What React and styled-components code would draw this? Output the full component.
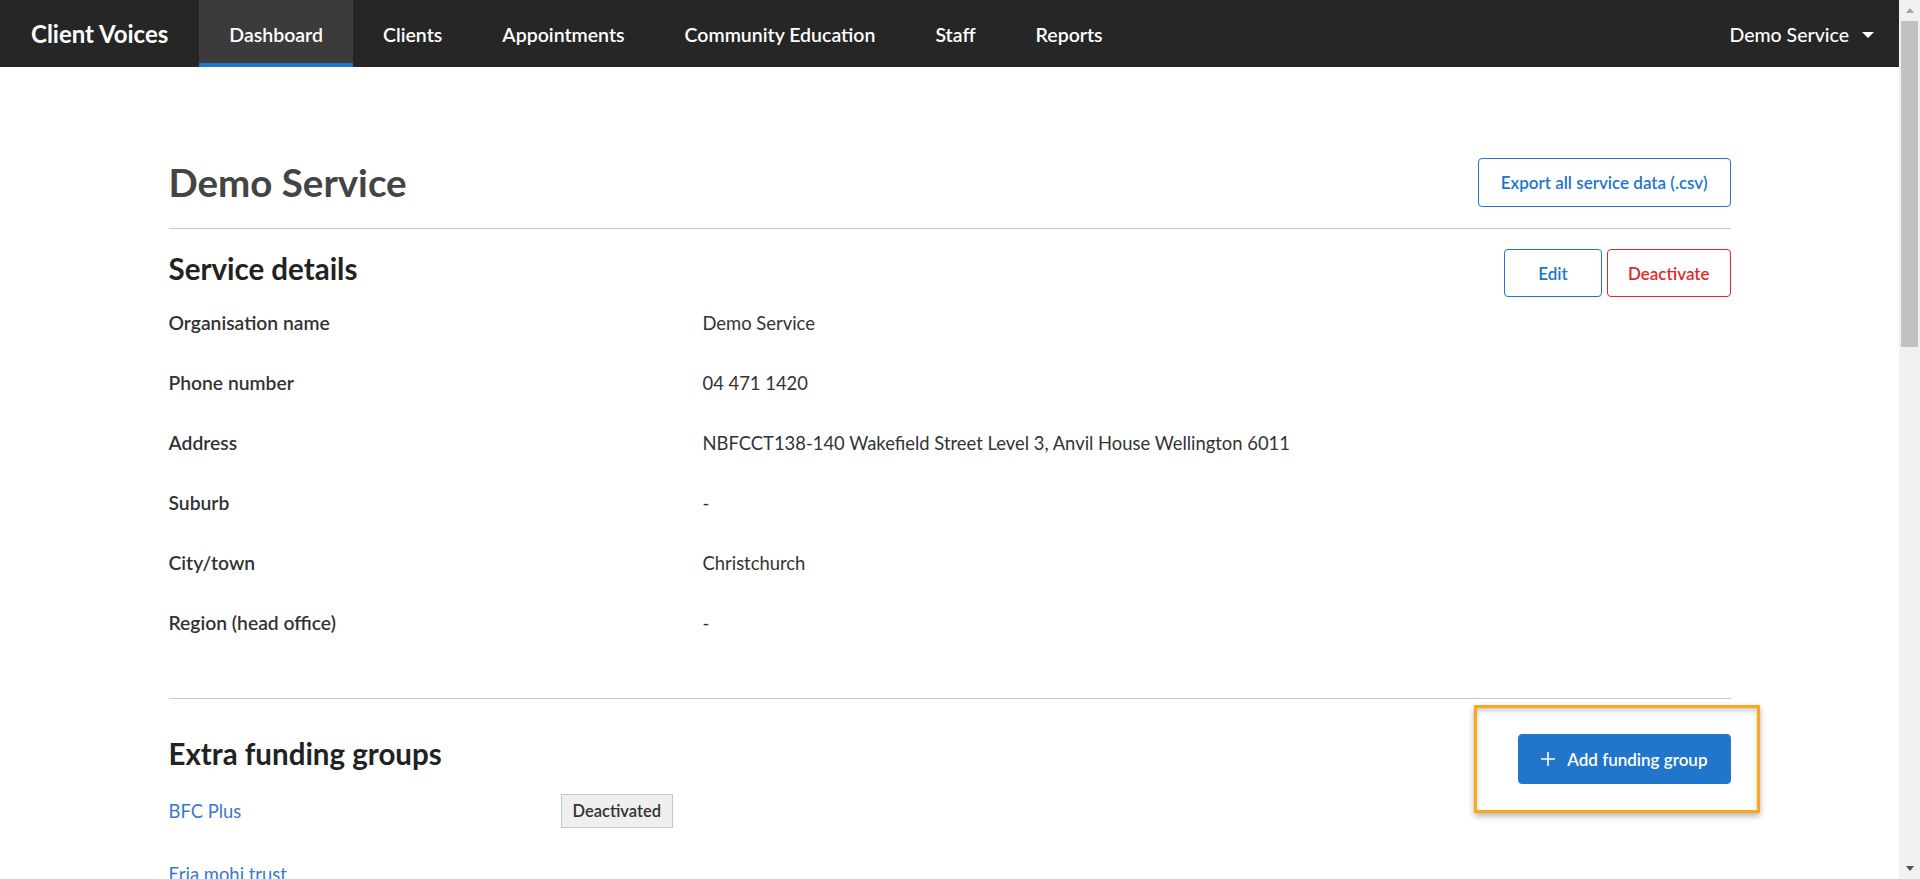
import React from 'react';
import styled, { createGlobalStyle } from 'styled-components';

const GlobalStyle = createGlobalStyle`
  body {
    margin: 0;
    overflow: hidden;
    background: #fff;
    color: #333;
    font-family: Lato, "Liberation Sans", sans-serif;
  }
`;

const Shell = styled.div`
  display: flex;
  height: 100vh;
  overflow: hidden;
`;

const Viewport = styled.div`
  flex: 1;
  min-width: 0;
`;

const Scrollbar = styled.div`
  display: flex;
  flex-direction: column;
  width: 21px;
  background: #f1f1f1;
`;

const ScrollArrow = styled.div`
  display: flex;
  align-items: center;
  justify-content: center;
  height: 21px;
  margin-top: ${(p) => (p.$down ? 'auto' : '0')};
  &::before {
    content: '';
    width: 0;
    height: 0;
    border-left: 4px solid transparent;
    border-right: 4px solid transparent;
    ${(p) =>
      p.$down
        ? 'border-top: 5px solid #505050;'
        : 'border-bottom: 5px solid #a3a3a3;'}
  }
`;

const Thumb = styled.div`
  height: 326px;
  margin: 0 2px;
  background: #c1c1c1;
`;

const NavBar = styled.nav`
  display: flex;
  height: 67px;
  background: #262626;
`;

const Brand = styled.a`
  display: flex;
  align-items: center;
  padding: 0 31px;
  color: #fff;
  font-size: 24px;
  font-weight: 700;
  text-decoration: none;
`;

const NavItem = styled.a`
  display: flex;
  align-items: center;
  padding: 2px 30px 0;
  color: #fff;
  font-size: 19.5px;
  font-weight: 600;
  text-decoration: none;
  background: ${(p) => (p.$active ? '#3b3b3b' : 'transparent')};
  box-shadow: ${(p) => (p.$active ? 'inset 0 -4px 0 #2176cc' : 'none')};
`;

const UserMenu = styled.a`
  display: flex;
  align-items: center;
  gap: 13px;
  margin-left: auto;
  padding: 2px 25px 0 30px;
  color: #fff;
  font-size: 19.5px;
  font-weight: 500;
  text-decoration: none;
`;

const Caret = styled.span`
  width: 0;
  height: 0;
  border-left: 6px solid transparent;
  border-right: 6px solid transparent;
  border-top: 6px solid #fff;
`;

const Main = styled.main`
  max-width: 1562px;
  margin: 0 auto;
  padding-top: 91px;
`;

const PageHeader = styled.header`
  display: flex;
  justify-content: space-between;
  align-items: center;
  padding-bottom: 21px;
  border-bottom: 1px solid #c8c8c8;
`;

const Title = styled.h1`
  margin: 0;
  color: #444;
  font-size: 38.5px;
  font-weight: 700;
  line-height: 1.2;
`;

const Section = styled.section`
  padding-bottom: ${(p) => p.$bottom || 0}px;
  border-bottom: ${(p) => (p.$divider ? '1px solid #c8c8c8' : 'none')};
`;

const SectionHead = styled.div`
  display: flex;
  justify-content: space-between;
  align-items: flex-start;
  margin-top: ${(p) => p.$top}px;
`;

const Heading = styled.h2`
  margin: 0;
  color: #222;
  font-size: 29.5px;
  font-weight: 700;
  line-height: 1.35;
`;

const ButtonGroup = styled.div`
  display: flex;
  gap: 5px;
`;

const Button = styled.button`
  display: inline-flex;
  align-items: center;
  justify-content: center;
  gap: 12px;
  min-width: 98px;
  height: ${(p) => p.$height || 48}px;
  padding: 0 ${(p) => p.$pad || 22}px;
  border: 1px solid ${(p) => p.$color};
  border-radius: 4px;
  background: ${(p) => (p.$solid ? p.$color : '#fff')};
  color: ${(p) => (p.$solid ? '#fff' : p.$color)};
  font-family: inherit;
  font-size: 17px;
  font-weight: 600;
  cursor: pointer;
`;

const DetailList = styled.dl`
  margin: 0;
`;

const DetailRow = styled.div`
  display: grid;
  grid-template-columns: 534px 1fr;
  align-items: baseline;
  padding: 14px 0 22px;
  line-height: 24px;
`;

const Label = styled.dt`
  font-size: 19.3px;
  font-weight: 600;
  color: #333;
`;

const Value = styled.dd`
  margin: 0;
  font-size: 18.4px;
  color: #333;
`;

const Highlight = styled.div`
  position: relative;
`;

const Ring = styled.span`
  position: absolute;
  top: -29px;
  right: -29px;
  bottom: -29px;
  left: -44px;
  border: 3px solid #f7a81b;
  box-shadow: 0 3px 6px rgba(0, 0, 0, 0.3), inset 0 3px 5px rgba(0, 0, 0, 0.2);
  pointer-events: none;
`;

const FundingList = styled.ul`
  margin: -5px 0 0;
  padding: 0;
  list-style: none;
`;

const FundingRow = styled.li`
  display: grid;
  grid-template-columns: 392px auto;
  justify-content: start;
  align-items: center;
  height: 63px;
  line-height: 24px;
  font-size: 18.4px;
`;

const GroupLink = styled.a`
  color: #3a78cb;
  text-decoration: none;
`;

const Badge = styled.span`
  display: inline-flex;
  align-items: center;
  height: 34px;
  padding: 0 11px;
  box-sizing: border-box;
  border: 1px solid #c6c6c6;
  background: #efefef;
  color: #333;
  font-size: 16.5px;
  font-weight: 600;
`;

const PlusIcon = () => (
  <svg width="14" height="14" viewBox="0 0 14 14" aria-hidden="true">
    <path d="M7 0v14M0 7h14" stroke="#fff" strokeWidth="1.6" />
  </svg>
);

const details = [
  ['Organisation name', 'Demo Service'],
  ['Phone number', '04 471 1420'],
  ['Address', 'NBFCCT138-140 Wakefield Street Level 3, Anvil House Wellington 6011'],
  ['Suburb', '-'],
  ['City/town', 'Christchurch'],
  ['Region (head office)', '-'],
];

const groups = [
  { name: 'BFC Plus', deactivated: true },
  { name: 'Eria mohi trust', deactivated: false },
];

const navItems = ['Dashboard', 'Clients', 'Appointments', 'Community Education', 'Staff', 'Reports'];

export default function App() {
  return (
    <Shell>
      <GlobalStyle />
      <Viewport>
        <NavBar>
          <Brand href="#">Client Voices</Brand>
          {navItems.map((item) => (
            <NavItem key={item} href="#" $active={item === 'Dashboard'}>
              {item}
            </NavItem>
          ))}
          <UserMenu href="#">
            Demo Service <Caret />
          </UserMenu>
        </NavBar>

        <Main>
          <PageHeader>
            <Title>Demo Service</Title>
            <Button $color="#2176cc" $height={49}>Export all service data (.csv)</Button>
          </PageHeader>

          <Section $divider $bottom={41}>
            <SectionHead $top={20}>
              <Heading>Service details</Heading>
              <ButtonGroup>
                <Button $color="#2176cc">Edit</Button>
                <Button $color="#dd2a2a" $pad={20}>Deactivate</Button>
              </ButtonGroup>
            </SectionHead>
            <DetailList>
              {details.map(([label, value]) => (
                <DetailRow key={label}>
                  <Label>{label}</Label>
                  <Value>{value}</Value>
                </DetailRow>
              ))}
            </DetailList>
          </Section>

          <Section>
            <SectionHead $top={35}>
              <Heading>Extra funding groups</Heading>
              <Highlight>
                <Ring />
                <Button $color="#2176cc" $solid $height={50}>
                  <PlusIcon />
                  Add funding group
                </Button>
              </Highlight>
            </SectionHead>
            <FundingList>
              {groups.map((g) => (
                <FundingRow key={g.name}>
                  <GroupLink href="#">{g.name}</GroupLink>
                  {g.deactivated && <Badge>Deactivated</Badge>}
                </FundingRow>
              ))}
            </FundingList>
          </Section>
        </Main>
      </Viewport>
      <Scrollbar>
        <ScrollArrow />
        <Thumb />
        <ScrollArrow $down />
      </Scrollbar>
    </Shell>
  );
}
